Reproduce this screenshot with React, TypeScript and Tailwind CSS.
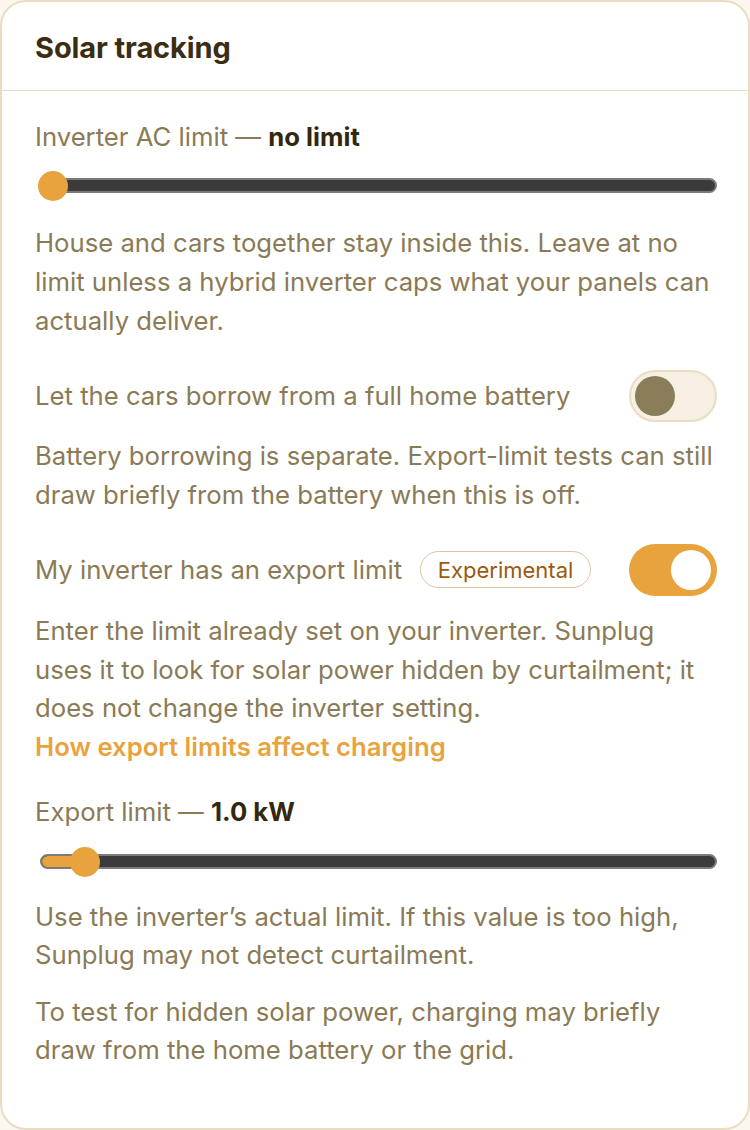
import { useState } from "react";

const muted = "text-[#8a7a55]";

function Slider({ percent }: { percent: number }) {
  // thumb travels across the track; fill follows the thumb centre
  return (
    <div className="relative h-[30px] w-full">
      <div className="absolute left-[5px] right-0 top-[7.5px] h-[15px] overflow-hidden rounded-full border-2 border-[#7b7b7b] bg-[#3b3b3b]">
        <div className="h-full rounded-full bg-[#e8a33d]" style={{ width: `calc(${percent}% + 10px)` }} />
      </div>
      <div
        className="absolute top-0 h-[30px] w-[30px] rounded-full bg-[#e8a33d]"
        style={{ left: `calc(${percent / 100} * (100% - 30px) + 3px)` }}
      />
    </div>
  );
}

function Toggle({ on, onChange }: { on: boolean; onChange: (v: boolean) => void }) {
  return (
    <button
      type="button"
      onClick={() => onChange(!on)}
      className={
        on
          ? "relative flex h-[52px] w-[88px] shrink-0 items-center justify-end rounded-full bg-[#e8a33d] px-[6px]"
          : "relative flex h-[52px] w-[88px] shrink-0 items-center justify-start rounded-full border-2 border-[#e9ddc2] bg-[#f6efe2] px-[4px]"
      }
    >
      <span className={on ? "h-[40px] w-[40px] rounded-full bg-white" : "h-[40px] w-[40px] rounded-full bg-[#8a7d5a]"} />
    </button>
  );
}

export default function App() {
  const [borrow, setBorrow] = useState(false);
  const [exportLimit, setExportLimit] = useState(true);

  return (
    <div className="min-h-[1130px] bg-[#fcf7ee] font-['Inter',sans-serif]">
      <div className="h-[1130px] overflow-hidden rounded-[26px] border-2 border-[#eadcc0] bg-white">
        <div className="flex h-[89px] items-center border-b-[1.5px] border-[#eadcc0] px-[33px] pt-[4px]">
          <h2 className="text-[29px] font-bold tracking-[-0.1px] text-[#3a2d12]">Solar tracking</h2>
        </div>

        <div className={`pl-[33px] pr-[31px] pt-[26px] text-[25.7px] leading-[39px] ${muted}`}>
          <div>
            Inverter AC limit — <span className="font-bold text-[#33280f]">no limit</span>
          </div>
          <div className="mt-[14.5px]">
            <Slider percent={0} />
          </div>
          <p className="mt-[22.5px]">
            House and cars together stay inside this. Leave at no limit unless a hybrid inverter caps what your
            panels can actually deliver.
          </p>

          <div className="mt-[29.5px] flex items-center justify-between">
            <span>Let the cars borrow from a full home battery</span>
            <Toggle on={borrow} onChange={setBorrow} />
          </div>
          <p className="mt-[15.5px] leading-[38.5px]">
            Battery borrowing is separate. Export-limit tests can still draw briefly from the battery when this is
            off.
          </p>

          <div className="mt-[29.5px] flex items-center justify-between">
            <div className="flex items-center gap-[18px]">
              <span>My inverter has an export limit</span>
              <span className="flex h-[37px] w-[171px] items-center justify-center rounded-full border-[1.5px] border-[#dcc39d] text-[22px] leading-none text-[#9c5a0c]">
                Experimental
              </span>
            </div>
            <Toggle on={exportLimit} onChange={setExportLimit} />
          </div>
          <p className="mt-[16.5px] leading-[38.5px]">
            Enter the limit already set on your inverter. Sunplug uses it to look for solar power hidden by
            curtailment; it does not change the inverter setting.
            <br />
            <a className="font-semibold text-[#e8a33d]" href="#">
              How export limits affect charging
            </a>
          </p>

          <div className="mt-[26px]">
            Export limit — <span className="font-bold text-[#33280f]">1.0 kW</span>
          </div>
          <div className="mt-[15.5px]">
            <Slider percent={4.9} />
          </div>
          <p className="mt-[21.5px] leading-[38px]">
            Use the inverter’s actual limit. If this value is too high, Sunplug may not detect curtailment.
          </p>
          <p className="mt-[19px] leading-[38px]">
            To test for hidden solar power, charging may briefly draw from the home battery or the grid.
          </p>
        </div>
      </div>
    </div>
  );
}
